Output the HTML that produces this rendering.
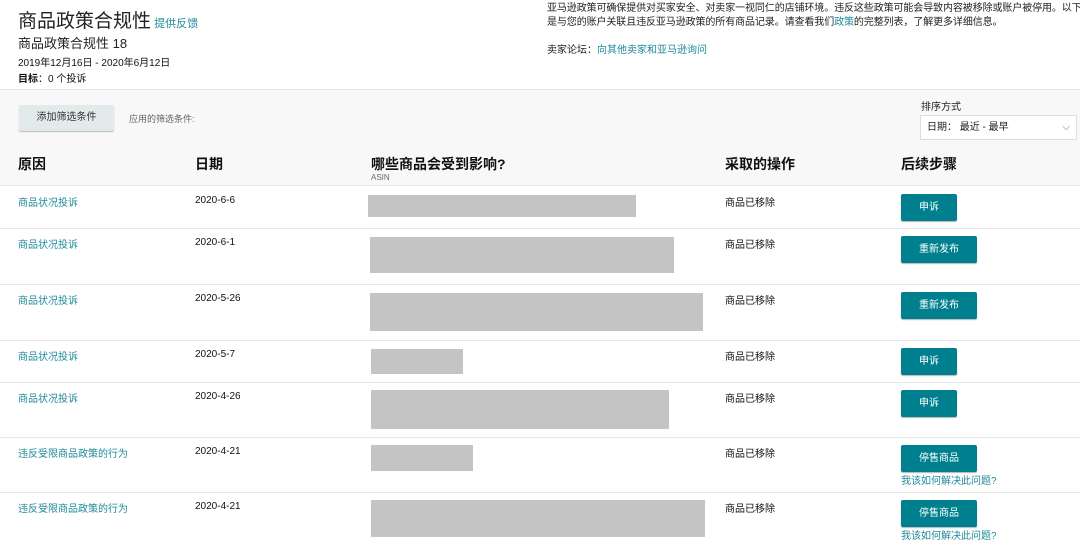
<!DOCTYPE html>
<html><head><meta charset="utf-8"><style>
*{margin:0;padding:0;box-sizing:border-box}
body{width:1080px;height:547px;overflow:hidden;background:#fff;font-family:"Liberation Sans","Noto Sans CJK SC",sans-serif;color:#111;position:relative;font-size:10px}
.a{position:absolute;white-space:nowrap}
.lk{color:#1f8a9a}
.band{position:absolute;left:0;top:89px;width:1080px;height:97px;background:#f8f8f8;border-top:1px solid #e6e6e6;border-bottom:1px solid #e6e6e6}
.hd{font-size:14px;font-weight:bold;color:#111}
.row{position:absolute;left:0;width:1080px;border-bottom:1px solid #e8e8e8}
.g{position:absolute;background:#c4c4c4}
.btn{position:absolute;left:901px;height:27px;background:#00808f;color:#fff;font-size:10px;text-align:center;line-height:27px;border-radius:2px;box-shadow:0 1px 1px rgba(0,0,0,.3)}
</style></head><body>
<div class="a" style="left:18px;top:6px;font-size:19px;color:#222">商品政策合规性<span class="lk" style="font-size:11px"> 提供反馈</span></div>
<div class="a" style="left:18px;top:33px;font-size:13px;color:#222">商品政策合规性 18</div>
<div class="a" style="left:18px;top:54px;font-size:10px">2019年12月16日 - 2020年6月12日</div>
<div class="a" style="left:18px;top:70px;font-size:10px"><b>目标</b>：0 个投诉</div>
<div class="a" style="left:547px;top:2px;font-size:10px;line-height:14px;color:#222;letter-spacing:-0.1px">亚马逊政策可确保提供对买家安全、对卖家一视同仁的店铺环境。违反这些政策可能会导致内容被移除或账户被停用。以下<br>是与您的账户关联且违反亚马逊政策的所有商品记录。请查看我们<span class="lk">政策</span>的完整列表，了解更多详细信息。</div>
<div class="a" style="left:547px;top:41px;font-size:10px;color:#222">卖家论坛：<span class="lk">向其他卖家和亚马逊询问</span></div>
<div class="band"></div>
<div class="a" style="left:19px;top:105px;width:95px;height:26px;background:#e3eaeb;border-radius:2px;box-shadow:0 1px 1px rgba(0,0,0,.25);text-align:center;line-height:26px;font-size:10px;color:#333">添加筛选条件</div>
<div class="a" style="left:129px;top:112px;font-size:9px;color:#666">应用的筛选条件:</div>
<div class="a" style="left:921px;top:98px;font-size:10px;color:#222">排序方式</div>
<div class="a" style="left:920px;top:115px;width:157px;height:25px;background:#fff;border:1px solid #ddd;font-size:10px;line-height:23px;padding-left:6px;color:#222">日期：&nbsp;最近 - 最早<span style="position:absolute;right:6px;top:0;color:#777">⌵</span></div>
<div class="a hd" style="left:18px;top:154px">原因</div>
<div class="a hd" style="left:195px;top:154px">日期</div>
<div class="a hd" style="left:371px;top:154px">哪些商品会受到影响?</div>
<div class="a" style="left:371px;top:173px;font-size:8px;color:#666">ASIN</div>
<div class="a hd" style="left:725px;top:154px">采取的操作</div>
<div class="a hd" style="left:901px;top:154px">后续步骤</div>

<div class="row" style="top:186px;height:43px"></div>
<div class="row" style="top:229px;height:56px"></div>
<div class="row" style="top:285px;height:56px"></div>
<div class="row" style="top:341px;height:42px"></div>
<div class="row" style="top:383px;height:55px"></div>
<div class="row" style="top:438px;height:55px"></div>

<div class="a lk" style="left:18px;top:194px">商品状况投诉</div><div class="a" style="left:195px;top:195px">2020-6-6</div><div class="g" style="left:368px;top:195px;width:268px;height:22px"></div><div class="a" style="left:725px;top:194px">商品已移除</div><div class="btn" style="top:194px;width:56px">申诉</div>
<div class="a lk" style="left:18px;top:236px">商品状况投诉</div><div class="a" style="left:195px;top:237px">2020-6-1</div><div class="g" style="left:370px;top:237px;width:304px;height:36px"></div><div class="a" style="left:725px;top:236px">商品已移除</div><div class="btn" style="top:236px;width:76px">重新发布</div>
<div class="a lk" style="left:18px;top:292px">商品状况投诉</div><div class="a" style="left:195px;top:293px">2020-5-26</div><div class="g" style="left:370px;top:293px;width:333px;height:38px"></div><div class="a" style="left:725px;top:292px">商品已移除</div><div class="btn" style="top:292px;width:76px">重新发布</div>
<div class="a lk" style="left:18px;top:348px">商品状况投诉</div><div class="a" style="left:195px;top:349px">2020-5-7</div><div class="g" style="left:371px;top:349px;width:92px;height:25px"></div><div class="a" style="left:725px;top:348px">商品已移除</div><div class="btn" style="top:348px;width:56px">申诉</div>
<div class="a lk" style="left:18px;top:390px">商品状况投诉</div><div class="a" style="left:195px;top:391px">2020-4-26</div><div class="g" style="left:371px;top:390px;width:298px;height:39px"></div><div class="a" style="left:725px;top:390px">商品已移除</div><div class="btn" style="top:390px;width:56px">申诉</div>
<div class="a lk" style="left:18px;top:445px">违反受限商品政策的行为</div><div class="a" style="left:195px;top:446px">2020-4-21</div><div class="g" style="left:371px;top:445px;width:102px;height:26px"></div><div class="a" style="left:725px;top:445px">商品已移除</div><div class="btn" style="top:445px;width:76px">停售商品</div><div class="a lk" style="left:901px;top:472px">我该如何解决此问题?</div>
<div class="a lk" style="left:18px;top:500px">违反受限商品政策的行为</div><div class="a" style="left:195px;top:501px">2020-4-21</div><div class="g" style="left:371px;top:500px;width:334px;height:37px"></div><div class="a" style="left:725px;top:500px">商品已移除</div><div class="btn" style="top:500px;width:76px">停售商品</div><div class="a lk" style="left:901px;top:527px">我该如何解决此问题?</div>
</body></html>
